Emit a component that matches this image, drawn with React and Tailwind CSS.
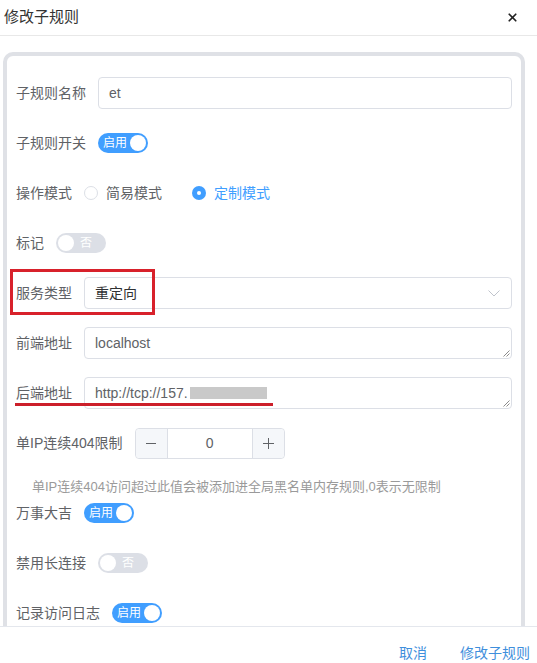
import { X } from 'lucide-react';

function Switch({ on }) {
  if (on) {
    return (
      <span className="flex h-[20px] w-[50px] shrink-0 items-center justify-between rounded-full bg-[#409eff] pl-[5px] pr-[2px]">
        <span className="text-[12px] leading-none text-white">启用</span>
        <span className="h-[16px] w-[16px] rounded-full bg-white" />
      </span>
    );
  }
  return (
    <span className="flex h-[20px] w-[50px] shrink-0 items-center gap-[6px] rounded-full bg-[#dcdfe6] pl-[2px]">
      <span className="h-[16px] w-[16px] rounded-full bg-white" />
      <span className="text-[12px] leading-none text-white">否</span>
    </span>
  );
}

function Row({ label, children }) {
  return (
    <div className="relative mb-[18px] flex h-[32px] items-center">
      <span className="shrink-0 pr-[12px] text-[14px] text-[#606266]">{label}</span>
      {children}
    </div>
  );
}

// the resize grip that a textarea shows in its corner
function Grip() {
  return (
    <svg className="absolute bottom-[1px] right-[1px]" width="8" height="8" viewBox="0 0 8 8">
      <path d="M7.5 1.5l-6 6M7.5 4.5l-3 3" stroke="#8a8a8a" strokeWidth="1" />
    </svg>
  );
}

function Radio({ checked, children }) {
  return (
    <span className="flex items-center">
      {checked ? (
        <span className="flex h-[14px] w-[14px] items-center justify-center rounded-full bg-[#409eff]">
          <span className="h-[4px] w-[4px] rounded-full bg-white" />
        </span>
      ) : (
        <span className="h-[14px] w-[14px] rounded-full border border-[#dcdfe6] bg-white" />
      )}
      <span className={`ml-[8px] text-[14px] ${checked ? 'text-[#409eff]' : 'text-[#606266]'}`}>{children}</span>
    </span>
  );
}

export default function App() {
  return (
    <div className="flex h-[663px] w-[537px] flex-col overflow-hidden bg-white font-['Liberation_Sans','Noto_Sans_CJK_SC',sans-serif]">
      <div className="flex h-[36px] shrink-0 items-center justify-between border-b border-[#e8e8e8] pl-[4px] pr-[18px]">
        <span className="text-[15px] text-[#333]">修改子规则</span>
        <X size={13} strokeWidth={3.2} className="text-[#222]" />
      </div>

      <div className="min-h-0 flex-1 overflow-hidden pl-[3px] pr-[12px] pt-[16px]">
        <div className="rounded-[10px] border-4 border-[#dfe1e6] px-[9px] pb-[20px] pt-[21px]">
          <Row label="子规则名称">
            <div className="flex h-full flex-1 items-center rounded-[4px] border border-[#dcdfe6] px-[10px] text-[14px] text-[#606266]">
              et
            </div>
          </Row>

          <Row label="子规则开关">
            <Switch on />
          </Row>

          <Row label="操作模式">
            <div className="flex items-center gap-[30px]">
              <Radio>简易模式</Radio>
              <Radio checked>定制模式</Radio>
            </div>
          </Row>

          <Row label="标记">
            <Switch />
          </Row>

          <Row label="服务类型">
            <div className="flex h-full flex-1 items-center justify-between rounded-[4px] border border-[#dcdfe6] pl-[10px] pr-[11px] text-[14px] text-[#303133]">
              <span>重定向</span>
              <svg width="12" height="7" viewBox="0 0 12 7">
                <path d="M0.5 0.5l5.5 5.5 5.5-5.5" fill="none" stroke="#c0c4cc" strokeWidth="1" />
              </svg>
            </div>
            <div className="pointer-events-none absolute left-[-6px] top-[-8px] h-[46px] w-[145px] border-[3px] border-[#d8212b]" />
          </Row>

          <Row label="前端地址">
            <div className="relative flex h-full flex-1 items-center rounded-[4px] border border-[#dcdfe6] px-[10px] text-[14px] text-[#606266]">
              localhost
              <Grip />
            </div>
          </Row>

          <Row label="后端地址">
            <div className="relative flex h-full flex-1 items-center rounded-[4px] border border-[#dcdfe6] px-[10px] text-[14px] text-[#606266]">
              <span>http://tcp://157.</span>
              <span className="ml-[2px] inline-block h-[12px] w-[77px] bg-[#c9c9c9]" />
              <Grip />
            </div>
            <div className="pointer-events-none absolute left-[-1px] top-[26px] h-[3px] w-[258px] bg-[#cc1f2a]" />
          </Row>

          <Row label="单IP连续404限制">
            <div className="flex h-[31px] w-[150px] items-stretch rounded-[4px] border border-[#dcdfe6]">
              <span className="flex w-[32px] items-center justify-center rounded-l-[4px] border-r border-[#dcdfe6] bg-[#f5f7fa]">
                <svg width="10" height="10" viewBox="0 0 10 10">
                  <path d="M0 5.5h10" stroke="#606266" strokeWidth="1" />
                </svg>
              </span>
              <span className="flex flex-1 items-center justify-center text-[14px] text-[#606266]">0</span>
              <span className="flex w-[32px] items-center justify-center rounded-r-[4px] border-l border-[#dcdfe6] bg-[#f5f7fa]">
                <svg width="11" height="11" viewBox="0 0 11 11">
                  <path d="M0 5.5h11M5.5 0v11" stroke="#606266" strokeWidth="1" />
                </svg>
              </span>
            </div>
          </Row>

          <div className="pl-[16px] text-[13px] leading-[20px] text-[#9a9a9a]">
            单IP连续404访问超过此值会被添加进全局黑名单内存规则,0表示无限制
          </div>

          <Row label="万事大吉">
            <Switch on />
          </Row>

          <Row label="禁用长连接">
            <Switch />
          </Row>

          <Row label="记录访问日志">
            <Switch on />
          </Row>
        </div>
      </div>

      <div className="flex h-[37px] shrink-0 items-start justify-end gap-[33px] border-t border-[#e4e7ed] pr-[7px] pt-[16px] text-[14px] leading-[20px] text-[#3f8fdc]">
        <span>取消</span>
        <span>修改子规则</span>
      </div>
    </div>
  );
}
